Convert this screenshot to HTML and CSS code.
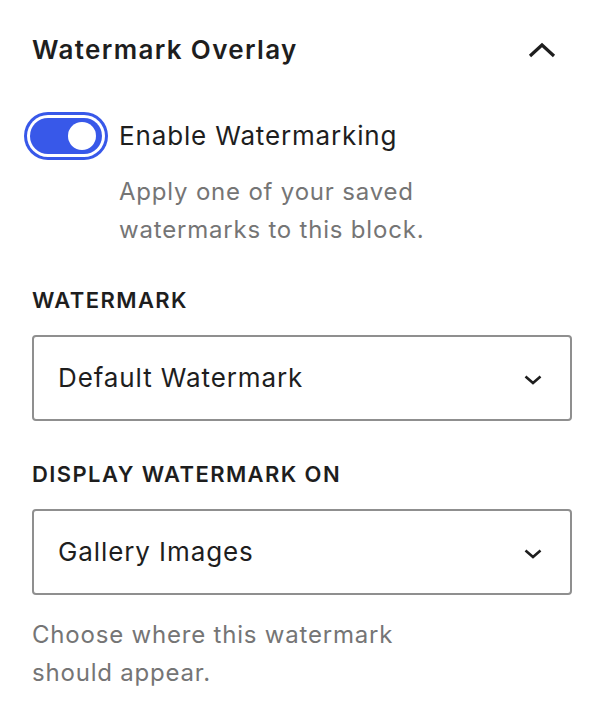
FILE: index.html
```html
<!DOCTYPE html>
<html lang="en">
<head>
<meta charset="utf-8">
<title>Watermark Overlay</title>
<link rel="stylesheet" href="styles.css">
</head>
<body>
<div class="panel">
  <div class="panel-header">
    <h2 class="panel-title">Watermark Overlay</h2>
    <svg class="chevron-up" width="28" height="16" viewBox="0 0 28 16" aria-hidden="true">
      <path d="M2 14 L14 3 L26 14" fill="none" stroke="#1e1e1e" stroke-width="3.2"/>
    </svg>
  </div>

  <div class="toggle-row">
    <span class="toggle"><span class="thumb"></span></span>
    <span class="toggle-label">Enable Watermarking</span>
  </div>
  <p class="help help-indent">Apply one of your saved watermarks to this block.</p>

  <div class="field">
    <div class="field-label">Watermark</div>
    <div class="select">
      <span class="select-value">Default Watermark</span>
      <svg class="chevron-down" width="18" height="12" viewBox="0 0 18 12" aria-hidden="true">
        <path d="M1.5 2.5 L9 9 L16.5 2.5" fill="none" stroke="#1e1e1e" stroke-width="2.6"/>
      </svg>
    </div>
  </div>

  <div class="field field-second">
    <div class="field-label">Display Watermark On</div>
    <div class="select">
      <span class="select-value">Gallery Images</span>
      <svg class="chevron-down" width="18" height="12" viewBox="0 0 18 12" aria-hidden="true">
        <path d="M1.5 2.5 L9 9 L16.5 2.5" fill="none" stroke="#1e1e1e" stroke-width="2.6"/>
      </svg>
    </div>
    <p class="help help-bottom">Choose where this watermark should appear.</p>
  </div>
</div>
</body>
</html>
```
FILE: styles.css
```css
* { box-sizing: border-box; }

html, body {
  margin: 0;
  padding: 0;
  background: #ffffff;
}

body {
  font-family: Inter, "Liberation Sans", Arial, sans-serif;
  color: #1e1e1e;
}

.panel {
  padding: 34px 28px 0 32px;
  width: 600px;
}

.panel-header {
  display: flex;
  align-items: center;
  justify-content: space-between;
  height: 32px;
}

.panel-title {
  margin: 0;
  font-size: 26px;
  font-weight: 600;
  line-height: 32px;
  letter-spacing: 1.35px;
}

.chevron-up {
  margin-right: 16px;
  display: block;
}

.toggle-row {
  display: flex;
  align-items: center;
  margin-top: 52px;
  height: 36px;
}

.toggle {
  position: relative;
  width: 72px;
  height: 36px;
  border-radius: 18px;
  background: #3858e9;
  margin-left: -2px;
  box-shadow: 0 0 0 3px #ffffff, 0 0 0 6px #3858e9;
  flex: none;
}

.thumb {
  position: absolute;
  top: 4px;
  right: 6px;
  width: 28px;
  height: 28px;
  border-radius: 50%;
  background: #ffffff;
}

.toggle-label {
  margin-left: 17px;
  font-size: 26px;
  line-height: 36px;
  letter-spacing: 0.85px;
}

.help {
  margin: 0;
  color: #757575;
  font-size: 24px;
  line-height: 38px;
  letter-spacing: 0.8px;
}

.help-indent {
  margin-top: 19px;
  margin-left: 87px;
  max-width: 340px;
}

.field {
  margin-top: 36px;
}

.field-second {
  margin-top: 38px;
}

.field-label {
  font-size: 22px;
  font-weight: 600;
  line-height: 30px;
  text-transform: uppercase;
  letter-spacing: 1.4px;
}

.select {
  margin-top: 20px;
  height: 86px;
  border: 2px solid #8f8f8f;
  border-radius: 4px;
  display: flex;
  align-items: center;
  justify-content: space-between;
  padding: 0 28px 0 24px;
}

.select-value {
  font-size: 26px;
  line-height: 32px;
  letter-spacing: 0.9px;
}

.chevron-down {
  display: block;
  margin-top: 4px;
}

.help-bottom {
  margin-top: 21px;
  max-width: 400px;
}
```
